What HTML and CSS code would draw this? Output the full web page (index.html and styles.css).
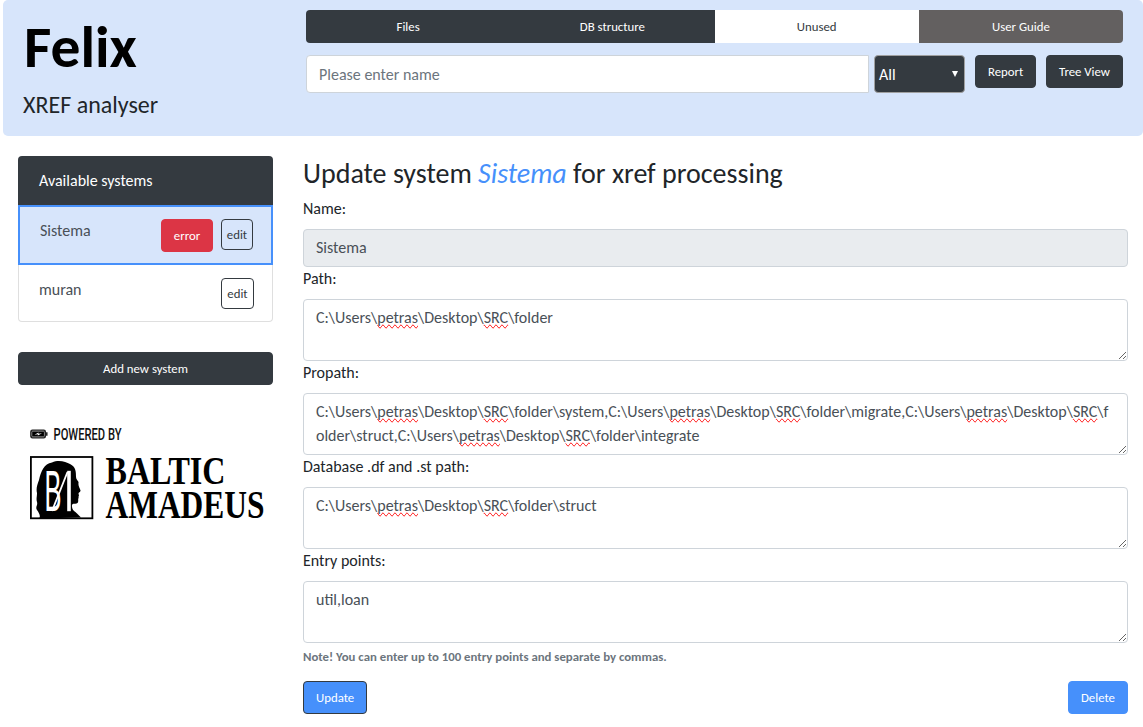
FILE: index.html
```html
<!DOCTYPE html>
<html lang="en">
<head>
<meta charset="utf-8">
<title>Felix - XREF analyser</title>
<link rel="stylesheet" href="styles.css">
</head>
<body>
<header class="header">
  <div class="brand">
    <h1 class="brand-name">Felix</h1>
    <p class="brand-sub">XREF analyser</p>
  </div>
  <div class="controls">
    <nav class="tabs">
      <a class="tab">Files</a>
      <a class="tab">DB structure</a>
      <a class="tab tab-light">Unused</a>
      <a class="tab tab-gray">User Guide</a>
    </nav>
    <div class="search">
      <input class="search-input" type="text" placeholder="Please enter name">
      <div class="select"><span>All</span><svg class="caret" viewBox="0 0 6 6"><path d="M0 0h6L3 6z" fill="#fff"/></svg></div>
      <button class="btn btn-dark">Report</button>
      <button class="btn btn-dark btn-tree">Tree View</button>
    </div>
  </div>
</header>
<div class="page">
  <aside class="sidebar">
    <div class="systems">
      <div class="systems-title">Available systems</div>
      <div class="system system-active"><span class="system-name">Sistema</span><button class="btn btn-danger">error</button><button class="btn btn-edit">edit</button></div>
      <div class="system system-last"><span class="system-name">muran</span><button class="btn btn-edit btn-edit-wide">edit</button></div>
    </div>
    <button class="btn btn-dark btn-add">Add new system</button>
    <svg class="logo" viewBox="0 0 244 108" width="244" height="108">
      <rect x="2.8" y="5.2" width="14.600" height="7.600" rx="1.600" fill="#000" stroke="#222" stroke-width="1.200"/>
      <rect x="3.800" y="6.200" width="12.600" height="5.600" rx="1" fill="none" stroke="#bbb" stroke-width=".7"/>
      <path d="M18.800 7.200v3.600" stroke="#111" stroke-width="1.400"/>
      <path d="M6.500 9.800l4-2.300v1.300l3.500-.5-4.200 2.300V9.300z" fill="#fff"/>
      <text class="logo-powered" x="25.500" y="15" textLength="68" lengthAdjust="spacingAndGlyphs">POWERED BY</text>
      <rect x="2.900" y="32" width="61.500" height="61.300" fill="#fff" stroke="#000" stroke-width="1.800"/>
      <path d="M11 93.500C13 91 11 88 9 85c-2-3 1-4 0-8-1-3 0-5 0-9-1-4 0-8 2-13 2-9 5-16 13-17.500C31 34.500 38 37 42 39c6 3 6 8 6 13 0 3 3 4 2.500 6-.5 3 1.500 5 2 7.500.3 1.500-2 1.800-2 3 0 1 1 1.800 0 3 .5 1.500-.5 2-.3 3.500.3 3-1 4-3.500 3.800-2.500 0-3 .5-2.700 3.200.5 3.500 2.500 4 5 6.500l4 4z" fill="#000"/>
      <text class="logo-mono" x="16.500" y="86" textLength="17" lengthAdjust="spacingAndGlyphs">B</text>
      <path d="M24 86L39.500 47" fill="none" stroke="#fff" stroke-width="1.800"/>
      <path d="M41 45.800v40.400" stroke="#fff" stroke-width="3.600"/>
      <text class="logo-name" x="77.500" y="58.800" textLength="120" lengthAdjust="spacingAndGlyphs">BALTIC</text>
      <text class="logo-name" x="77.500" y="93.300" textLength="159" lengthAdjust="spacingAndGlyphs">AMADEUS</text>
    </svg>
  </aside>
  <main class="main">
    <h2 class="title">Update system <i class="title-system">Sistema</i> for xref processing</h2>
    <label class="label">Name:</label>
    <div class="field field-disabled">Sistema</div>
    <label class="label">Path:</label>
    <div class="field area">C:\Users\<span class="misspelt">petras</span>\Desktop\<span class="misspelt">SRC</span>\folder</div>
    <label class="label">Propath:</label>
    <div class="field area">C:\Users\<span class="misspelt">petras</span>\Desktop\<span class="misspelt">SRC</span>\folder\system,C:\Users\<span class="misspelt">petras</span>\Desktop\<span class="misspelt">SRC</span>\folder\migrate,C:\Users\<span class="misspelt">petras</span>\Desktop\<span class="misspelt">SRC</span>\folder\struct,C:\Users\<span class="misspelt">petras</span>\Desktop\<span class="misspelt">SRC</span>\folder\integrate</div>
    <label class="label">Database .df and .st path:</label>
    <div class="field area">C:\Users\<span class="misspelt">petras</span>\Desktop\<span class="misspelt">SRC</span>\folder\struct</div>
    <label class="label">Entry points:</label>
    <div class="field area">util,loan</div>
    <p class="note">Note! You can enter up to 100 entry points and separate by commas.</p>
    <div class="actions">
      <button class="btn btn-primary btn-outlined">Update</button>
      <button class="btn btn-primary">Delete</button>
    </div>
  </main>
</div>
</body>
</html>
```
FILE: styles.css
```css
* { box-sizing: border-box; }

body {
  margin: 0;
  height: 727px;
  overflow: hidden;
  background: #fff;
  color: #212529;
  font: 16px/24px Carlito, Calibri, Lato, sans-serif;
}

h1, h2, p { margin: 0; font-weight: 400; }

.header {
  display: flex;
  height: 136px;
  margin-left: 3px;
  padding: 10px 20px 0;
  background: #d7e5fb;
  border-radius: 5px;
}
.brand { width: 283px; }
.brand-name {
  padding: 2px 0 0 1px;
  color: #000;
  font-size: 59.500px;
  font-weight: 700;
  line-height: 70px;
}
.brand-sub { padding-top: 8px; font-size: 24px; line-height: 29px; }
.controls { flex: 1; }

.tabs {
  display: grid;
  grid-template-columns: repeat(4, 1fr);
  height: 33px;
  border-radius: 4px;
  overflow: hidden;
}
.tab {
  background: #343a40;
  color: #fff;
  font-size: 12.800px;
  line-height: 33px;
  text-align: center;
}
.tab-light { background: #fff; color: #343a40; }
.tab-gray { background: #636060; }

.search { display: flex; align-items: flex-start; padding-top: 12px; }
.search-input {
  width: 563px;
  height: 38px;
  padding: 6px 12px;
  border: 1px solid #ced4da;
  border-radius: 4px 0 0 4px;
  color: #495057;
  font: inherit;
}
.search-input::placeholder { color: #6c757d; }
.select {
  display: flex;
  justify-content: space-between;
  align-items: center;
  width: 91px;
  height: 38px;
  margin: 0 10px 0 5px;
  padding: 2px 6px 0 4px;
  border: 1px solid #a0a0a0;
  border-radius: 4px;
  background: #343a40;
  color: #fff;
}
.caret { width: 6px; height: 6px; margin-bottom: 3px; }

.btn {
  height: 33px;
  padding: 0 12px;
  border: 1px solid transparent;
  border-radius: 4px;
  color: #fff;
  font: 12.800px/19px Carlito, Calibri, Lato, sans-serif;
  white-space: nowrap;
}
.btn-dark { background: #343a40; border-color: #343a40; }
.btn-tree { margin-left: auto; }
.btn-danger { width: 52px; padding: 0; background: #dc3545; border-color: #dc3545; }
.btn-primary { background: #4690fb; border-color: #4690fb; }
.btn-outlined { border-color: #343a40; }
.btn-edit {
  width: 32px;
  height: 31px;
  margin-left: 8px;
  padding: 0;
  border-color: #343a40;
  background: transparent;
  color: #343a40;
}
.btn-edit-wide { width: 33px; }

.page { display: flex; padding: 20px 15px 0 18px; }
.sidebar { width: 255px; margin-right: 30px; }
.systems-title {
  height: 50px;
  padding: 13px 21px;
  border-radius: 4px 4px 0 0;
  background: #343a40;
  color: #fff;
}
.system {
  display: flex;
  align-items: flex-start;
  height: 57px;
  padding: 13px 18px 0 20px;
  border: 1px solid #dfdfdf;
  border-top: 0;
  color: #495057;
}
.system-name { flex: 1; }
.system-active {
  height: 60px;
  margin-top: -1px;
  padding: 12px 18px 0 20px;
  border: 2px solid #4690fb;
  background: #d7e5fb;
}
.system-last { border-radius: 0 0 4px 4px; }
.btn-add { width: 100%; margin-top: 30px; }

.logo { display: block; margin: 40px 0 0 10px; overflow: visible; }
.logo-powered { font: 500 16px Roboto, sans-serif; fill: #111; }
.logo-mono { font: 57px "Liberation Sans", sans-serif; fill: #fff; }
.logo-name { font: bold 40px "Liberation Serif", serif; fill: #000; }

.main { flex: 1; min-width: 0; }
.title { padding: 1px 0 6px; font-size: 28px; line-height: 34px; }
.title-system { color: #4690fb; }
.label { display: block; }
.label + .field { margin-top: 8px; }
.field {
  height: 38px;
  padding: 6px 12px;
  border: 1px solid #ced4da;
  border-radius: 4px;
  color: #495057;
  word-break: break-all;
}
.field-disabled { background: #e9ecef; }
.area { height: 62px; overflow: hidden; resize: vertical; }
.misspelt { text-decoration-line: spelling-error; }
.note {
  padding-top: 4px;
  color: #6c757d;
  font-size: 12.800px;
  font-weight: 700;
  line-height: 20px;
}
.actions { display: flex; justify-content: space-between; padding-top: 14px; }
```
